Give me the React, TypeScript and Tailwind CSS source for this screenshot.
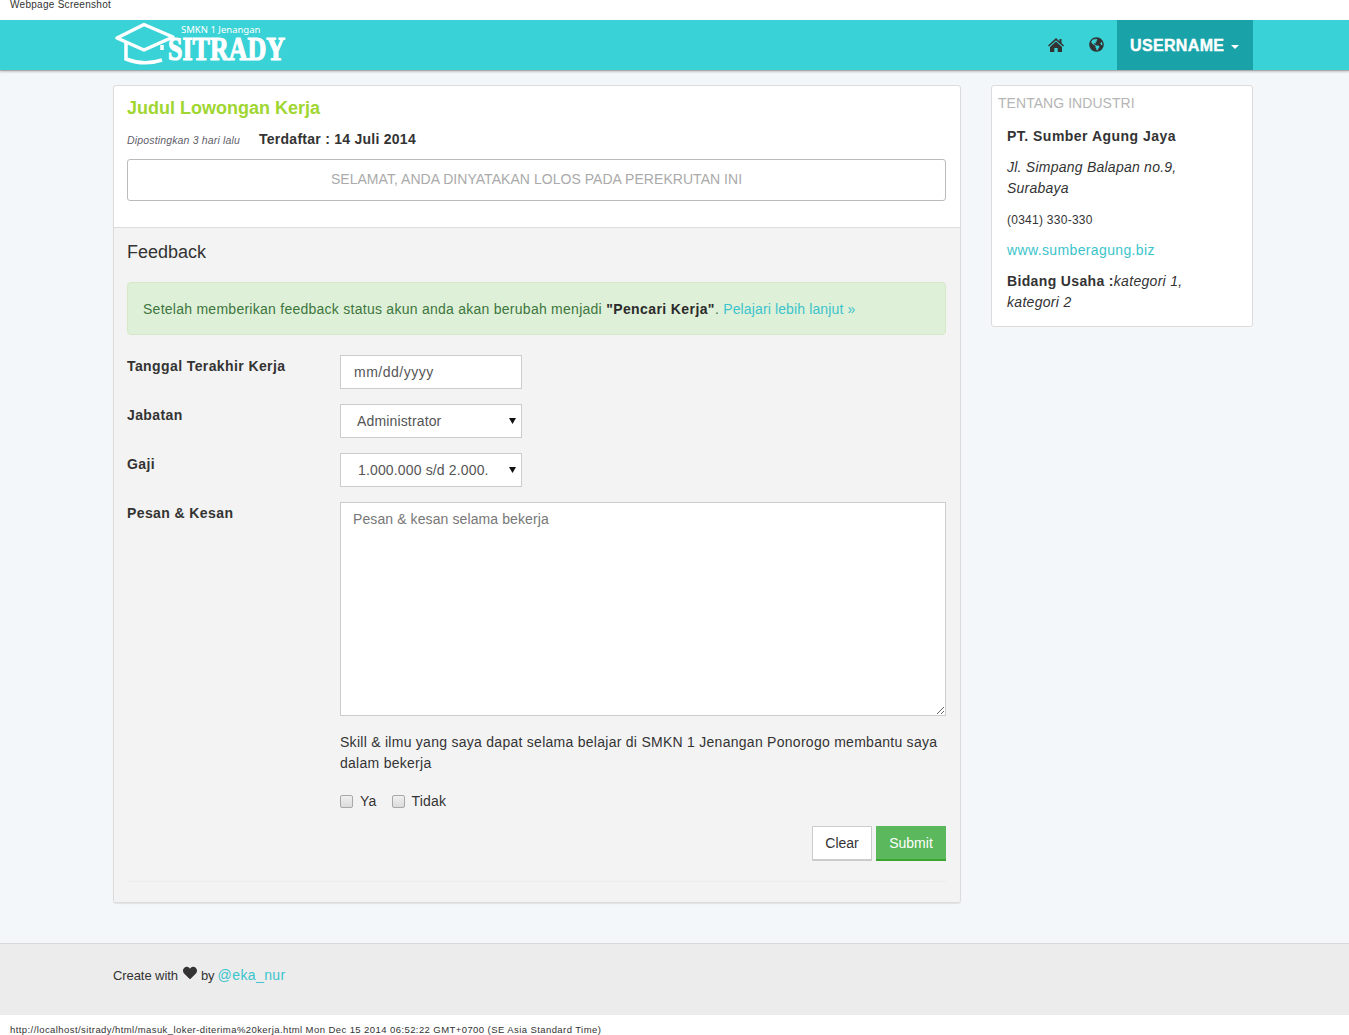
import { FaGlobeAmericas, FaHeart } from "react-icons/fa";

function Logo() {
  return (
    <svg width="172" height="44" viewBox="0 0 172 44" className="block ml-[2px] overflow-visible">
      <path d="M2 15 L29 1.500 L58 14 L29 27 Z" fill="none" stroke="#fff" strokeWidth="3.500" strokeLinejoin="round" />
      <path d="M11 20 V36 Q29 43 47 37" fill="none" stroke="#fff" strokeWidth="3.500" />
      <path d="M47 22 V27" fill="none" stroke="#fff" strokeWidth="3.500" />
      <text x="66" y="10" fontSize="9.500" fontFamily="'Noto Sans', sans-serif" fill="#fff">SMKN 1 Jenangan</text>
      <text x="53" y="37" fontSize="33" fontWeight="700" fontFamily="'Liberation Serif', serif" fill="#fff" stroke="#fff" strokeWidth="1.200" textLength="117" lengthAdjust="spacingAndGlyphs">SITRADY</text>
    </svg>
  );
}

function HomeIcon() {
  return (
    <svg width="16" height="14" viewBox="0 0 16 14" className="mr-[25px] mt-[-1px]">
      <path d="M8 0 L11.500 3.200 V1 H13.500 V5 L16 7.400 L15 8.500 L8 2.200 L1 8.500 L0 7.400 Z" fill="#333" />
      <path d="M8 3.600 L14 9 V14 H9.700 V10 H6.300 V14 H2 V9 Z" fill="#333" />
    </svg>
  );
}

function Row({ label, children }: { label: string; children: React.ReactNode }) {
  return (
    <div className="flex mb-[15px]">
      <label className="w-[213px] shrink-0 pt-[1px] text-[14px] leading-[20px] tracking-[0.4px] font-bold text-[#333]">{label}</label>
      {children}
    </div>
  );
}

function Select({ value, pl }: { value: string; pl: string }) {
  return (
    <div className="relative w-[182px] h-[34px]">
      <select defaultValue={value} className={"appearance-none block w-full h-full bg-white border border-[#ccc] text-[14px] tracking-[0.15px] text-[#555] outline-none " + pl}>
        <option>{value}</option>
      </select>
      <svg width="7" height="6" viewBox="0 0 7 6" className="absolute right-[6px] top-[14px]">
        <path d="M0 0H7L3.500 6Z" fill="#111" />
      </svg>
    </div>
  );
}

function Check() {
  return (
    <input
      type="checkbox"
      className="appearance-none w-[13px] h-[13px] mr-[7px] rounded-[2px] border border-[#a8a8a8] bg-gradient-to-b from-[#f0f0f0] to-[#dcdcdc]"
    />
  );
}

export default function App() {
  return (
    <div className="w-[1349px] h-[1035px] flex flex-col overflow-hidden bg-[#f4f7fa] font-['Liberation_Sans',Arial,sans-serif] text-[14px] text-[#333]">
      <div className="h-[20px] shrink-0 bg-white pl-[10px] text-[10px] leading-[10px] tracking-[0.28px] text-[#333]">Webpage Screenshot</div>

      <header className="h-[51px] shrink-0 bg-[#39d2d6] border-b border-[#a9a9a9] shadow-[0_1px_2px_rgba(0,0,0,0.2)] pl-[113px]">
        <div className="w-[1140px] h-[50px] flex items-center justify-between">
          <Logo />
          <nav className="flex items-center h-full">
            <HomeIcon />
            <FaGlobeAmericas className="text-[#333] text-[15px] mr-[13px] mb-[2px]" />
            <div className="h-full w-[136px] bg-[#19a3a8] flex items-center pl-[13px] pt-[2px] text-white font-bold text-[16px] tracking-[0.35px] [-webkit-text-stroke:0.4px_white]">
              USERNAME
              <span className="ml-[7px] mt-[2px] w-0 h-0 border-x-[4px] border-x-transparent border-t-[4px] border-t-white" />
            </div>
          </nav>
        </div>
      </header>

      <main className="flex-1 pl-[113px] pt-[14px] flex items-start gap-[30px]">
        <section className="w-[848px] h-[818px] flex flex-col bg-white border border-[#dcdcdc] rounded-[3px] shadow-[0_1px_1px_rgba(0,0,0,0.08)] overflow-hidden">
          <div className="h-[142px] shrink-0 px-[13px] pt-[11px] border-b border-[#dcdcdc]">
            <h1 className="text-[18px] leading-[22px] font-bold text-[#a0d631]">Judul Lowongan Kerja</h1>
            <div className="flex items-baseline mt-[10px] h-[20px]">
              <span className="w-[132px] text-[10.5px] italic tracking-[0.16px] text-[#5f5f6b]">Dipostingkan 3 hari lalu</span>
              <span className="font-bold text-[14px] tracking-[0.26px]">Terdaftar : 14 Juli 2014</span>
            </div>
            <div className="mt-[10px] h-[42px] w-[819px] flex items-center justify-center pb-[2px] border border-[#bbb] rounded-[3px] text-[14px] tracking-[0.04px] text-[#aaa]">
              SELAMAT, ANDA DINYATAKAN LOLOS PADA PEREKRUTAN INI
            </div>
          </div>

          <div className="flex-1 bg-[#f3f3f3] px-[13px]">
            <h2 className="pt-[14px] text-[18px] leading-[20px] text-[#333]">Feedback</h2>
            <div className="mt-[20px] w-[819px] h-[53px] flex items-center px-[15px] pt-[2px] bg-[#dff0d8] border border-[#d6e9c6] rounded-[4px] text-[#3c763d]">
              <span className="tracking-[0.26px]">
                Setelah memberikan feedback status akun anda akan berubah menjadi <b className="text-[#2b2b2b] tracking-[0.4px]">"Pencari Kerja"</b>. <span className="text-[#3bc4cc] tracking-[0.13px]">Pelajari lebih lanjut »</span>
              </span>
            </div>

            <div className="mt-[20px]">
              <Row label="Tanggal Terakhir Kerja">
                <input readOnly value="mm/dd/yyyy" className="block w-[182px] h-[34px] pl-[13px] bg-white border border-[#ccc] text-[14px] tracking-[0.5px] text-[#555] outline-none" />
              </Row>
              <Row label="Jabatan">
                <Select value="Administrator" pl="pl-[16px]" />
              </Row>
              <Row label="Gaji">
                <Select value="1.000.000 s/d 2.000." pl="pl-[17px]" />
              </Row>
              <Row label="Pesan & Kesan">
                <div className="w-[606px]">
                  <textarea placeholder="Pesan & kesan selama bekerja" className="block w-[606px] h-[214px] px-[12px] py-[6px] bg-white border border-[#ccc] text-[14px] leading-[20px] tracking-[0.1px] outline-none placeholder:text-[#777]" />
                  <p className="mt-[16px] leading-[21px] tracking-[0.27px]">Skill &amp; ilmu yang saya dapat selama belajar di SMKN 1 Jenangan Ponorogo membantu saya dalam bekerja</p>
                  <div className="mt-[17px] flex items-center h-[20px] tracking-[0.2px]">
                    <Check />
                    <span className="mr-[15px]">Ya</span>
                    <Check />
                    <span>Tidak</span>
                  </div>
                  <div className="mt-[15px] flex justify-end gap-[4px]">
                    <button className="w-[60px] h-[35px] bg-white border border-[#ccc] border-b-2 text-[14px] text-[#333]">Clear</button>
                    <button className="w-[70px] h-[35px] pt-[2px] bg-[#5cb85c] border-b-2 border-[#3aa52e] text-[14px] text-white">Submit</button>
                  </div>
                </div>
              </Row>
              <div className="mt-[20px] h-px w-[819px] bg-[#ececec]" />
            </div>
          </div>
        </section>

        <aside className="w-[262px] h-[242px] bg-white border border-[#dcdcdc] rounded-[3px] px-[6px] pt-[7px]">
          <h3 className="text-[14px] leading-[20px] tracking-[0.05px] text-[#b5b5b5]">TENTANG INDUSTRI</h3>
          <div className="pl-[9px] pr-[40px]">
            <p className="mt-[13px] leading-[20px] font-bold tracking-[0.48px]">PT. Sumber Agung Jaya</p>
            <p className="mt-[11px] leading-[21px] italic tracking-[0.24px]">Jl. Simpang Balapan no.9, Surabaya</p>
            <p className="mt-[11px] leading-[21px] text-[12px] tracking-[0.26px]">(0341) 330-330</p>
            <p className="mt-[9px] leading-[21px] text-[#3bc4cc] tracking-[0.37px]">www.sumberagung.biz</p>
            <p className="mt-[10px] leading-[21px]"><b className="tracking-[0.35px]">Bidang Usaha :</b><i className="tracking-[0.3px]">kategori 1, kategori 2</i></p>
          </div>
        </aside>
      </main>

      <footer className="h-[72px] shrink-0 bg-[#ececec] border-t border-[#d8d8d8] pl-[113px] pt-[21px] flex items-start text-[14px] leading-[20px]">
        <span className="text-[13px] mt-[1px] tracking-[-0.08px]">Create with</span>
        <FaHeart className="ml-[5px] mr-[4px] mt-[1px] text-[14px] text-[#333]" />
        <span className="text-[13px] mt-[1px]">by</span>
        <span className="ml-[3px] text-[#3bc4cc] tracking-[0.4px]">@eka_nur</span>
      </footer>

      <div className="h-[20px] shrink-0 bg-white pl-[10px] pt-[9px] text-[9.500px] leading-[11px] tracking-[0.42px] text-[#333]">
        http://localhost/sitrady/html/masuk_loker-diterima%20kerja.html Mon Dec 15 2014 06:52:22 GMT+0700 (SE Asia Standard Time)
      </div>
    </div>
  );
}
